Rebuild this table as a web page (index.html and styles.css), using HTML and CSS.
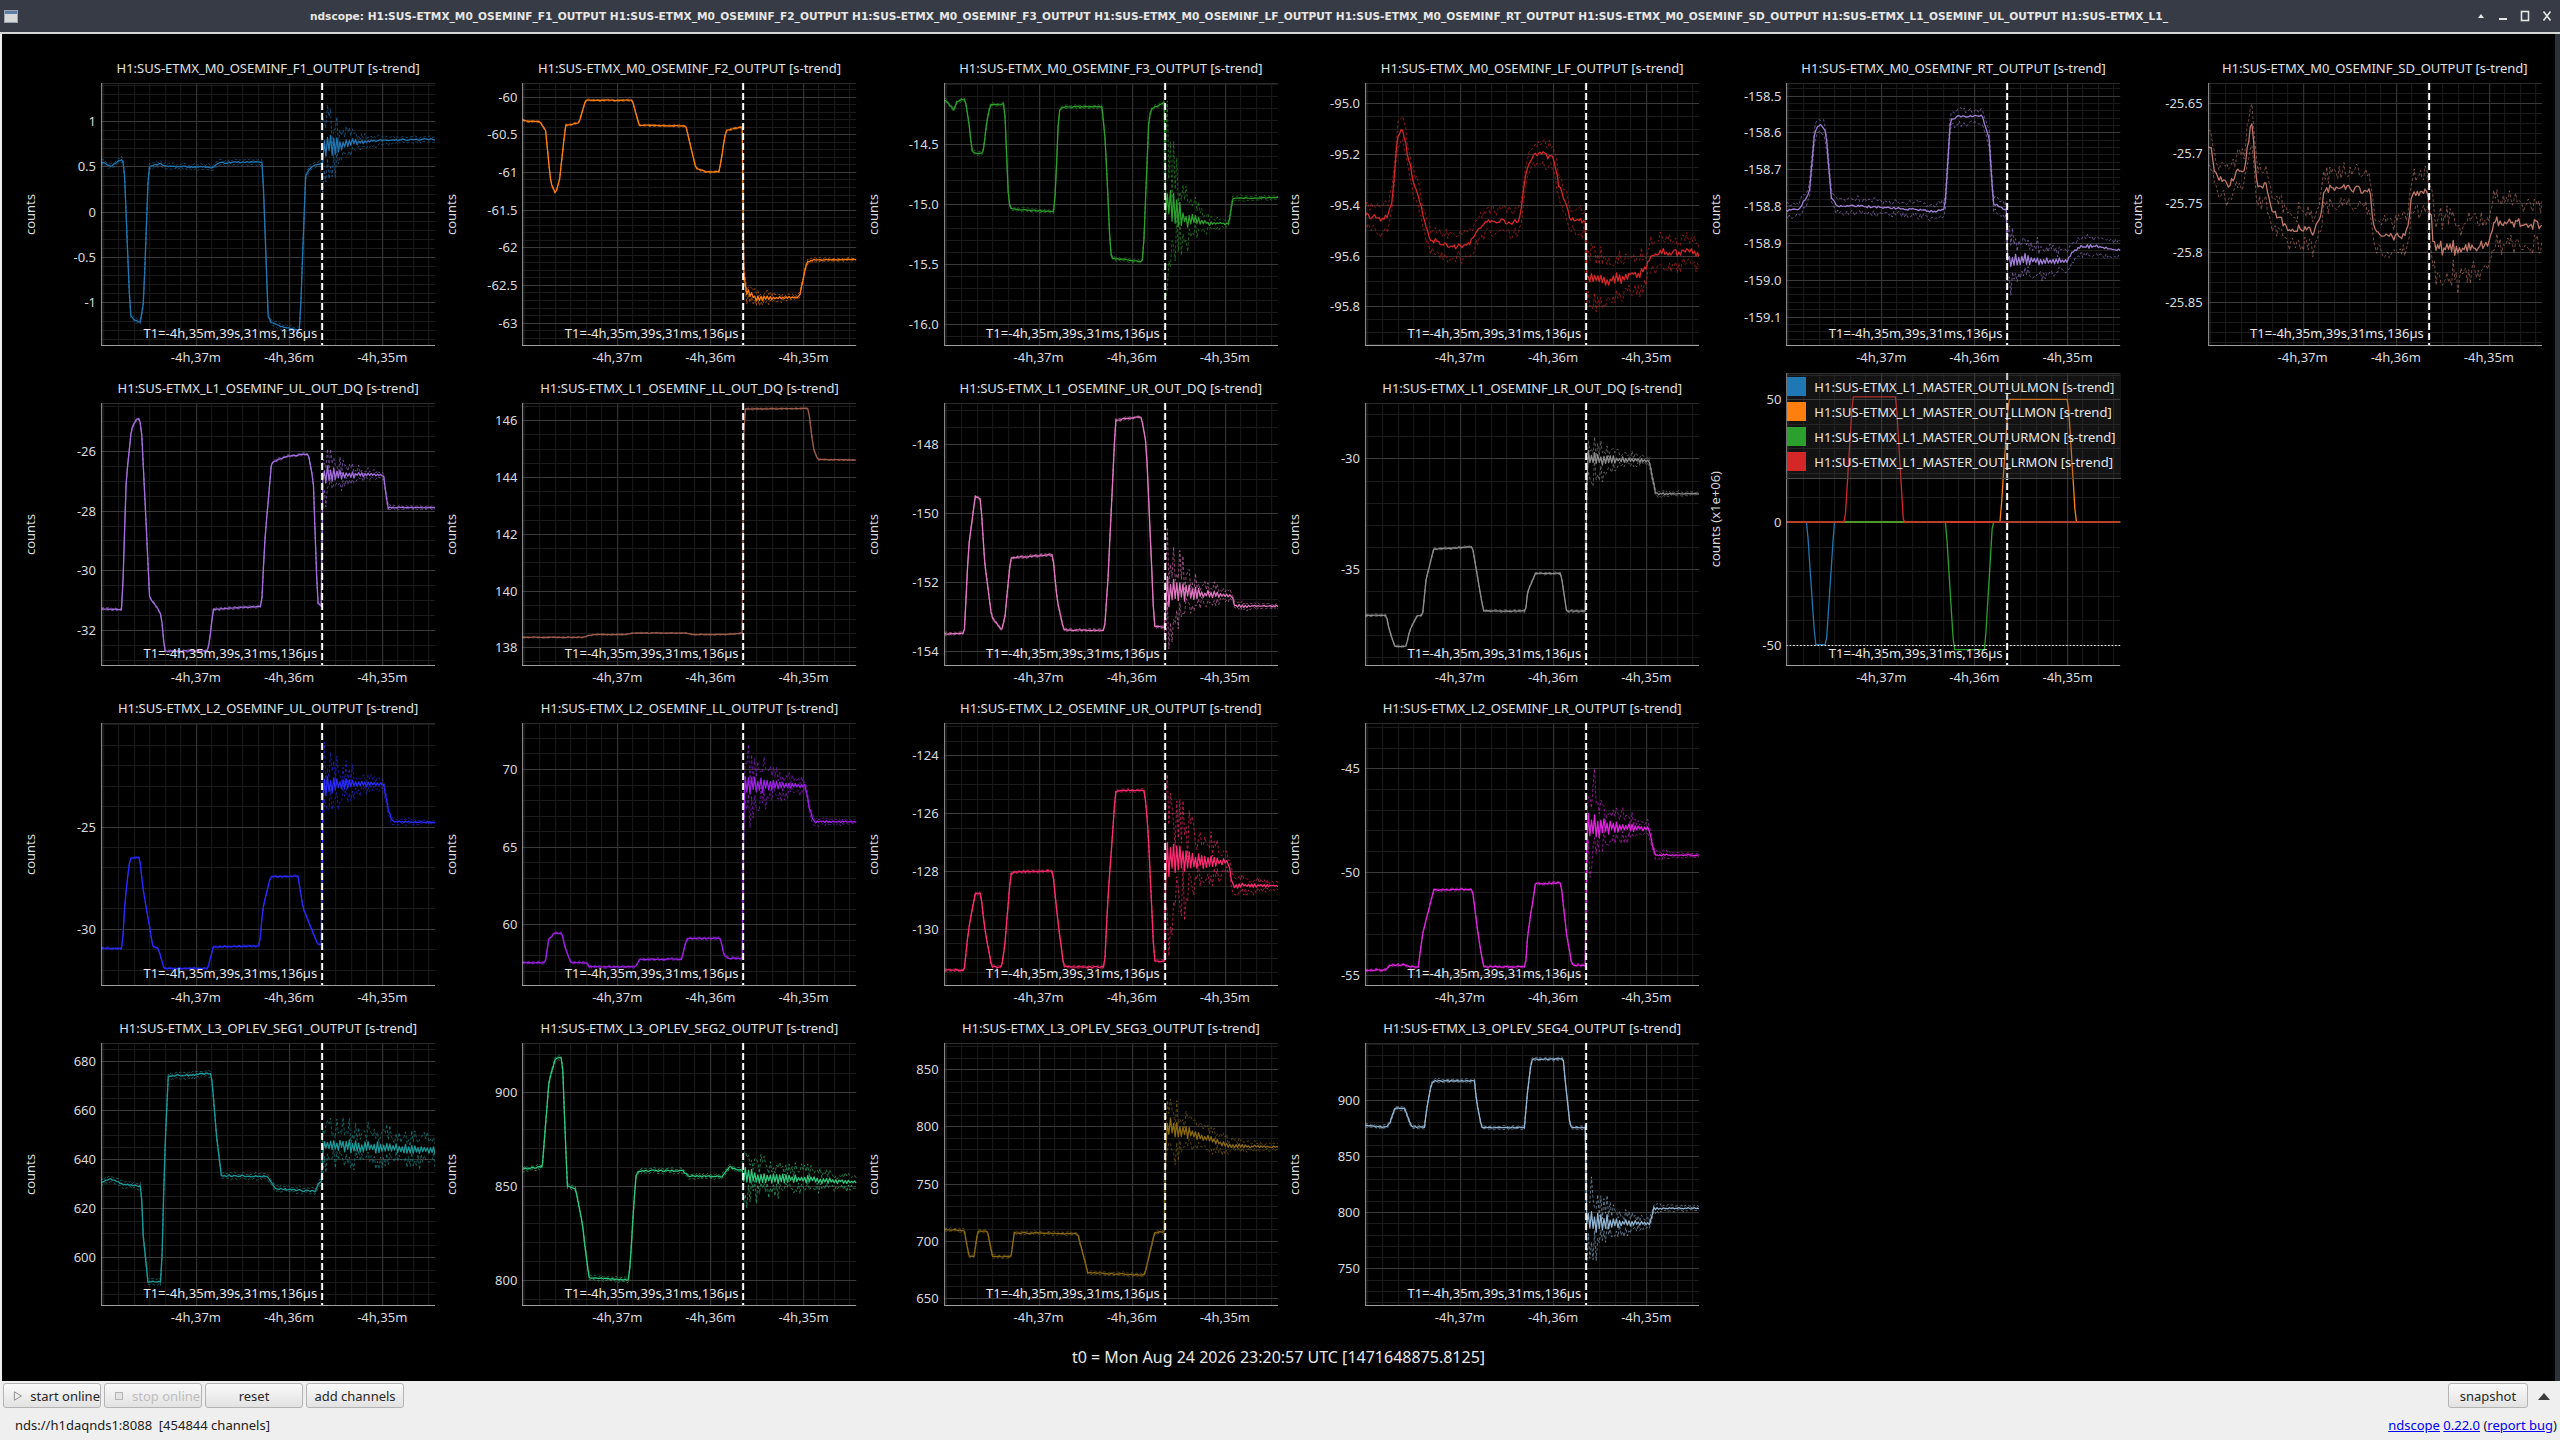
FILE: index.html
```html
<!DOCTYPE html>
<html lang="en">
<head>
<meta charset="utf-8">
<title>ndscope</title>
<link rel="stylesheet" href="styles.css">
</head>
<body>
<div class="window">
  <div class="titlebar">
    <div class="appicon"><svg width="14" height="13" viewBox="0 0 14 13"><rect x="0.5" y="0.5" width="13" height="12" fill="#d8d8d8" stroke="#9aa3ad"/><rect x="1" y="1" width="12" height="3" fill="#5b7fa6"/></svg></div>
    <div class="wtitle">ndscope: H1:SUS-ETMX_M0_OSEMINF_F1_OUTPUT H1:SUS-ETMX_M0_OSEMINF_F2_OUTPUT H1:SUS-ETMX_M0_OSEMINF_F3_OUTPUT H1:SUS-ETMX_M0_OSEMINF_LF_OUTPUT H1:SUS-ETMX_M0_OSEMINF_RT_OUTPUT H1:SUS-ETMX_M0_OSEMINF_SD_OUTPUT H1:SUS-ETMX_L1_OSEMINF_UL_OUTPUT H1:SUS-ETMX_L1_</div>
    <div class="wbtns">
      <svg width="10" height="10" viewBox="0 0 10 10"><path d="M2 7 L5 3 L8 7 Z" fill="#e6e6e6"/></svg>
      <svg width="10" height="10" viewBox="0 0 10 10"><rect x="1" y="7" width="8" height="2" fill="#e6e6e6"/></svg>
      <svg width="10" height="12" viewBox="0 0 10 12"><rect x="1.5" y="1.5" width="7" height="9" fill="none" stroke="#e6e6e6" stroke-width="1.6"/></svg>
      <svg width="10" height="12" viewBox="0 0 10 12"><path d="M1.5 1.5 L8.5 10.5 M8.5 1.5 L1.5 10.5" stroke="#e6e6e6" stroke-width="1.6"/></svg>
    </div>
  </div>

  <div class="canvas">
    <div class="grid">

      <!-- row 1 -->
      <div class="cell">
        <div class="ttl">H1:SUS-ETMX_M0_OSEMINF_F1_OUTPUT [s-trend]</div>
        <div class="frame">
          <div class="ylab"><span>counts</span></div>
          <div class="yticks"><span data-v="1">1</span><span data-v="0.5">0.5</span><span data-v="0">0</span><span data-v="-0.5">-0.5</span><span data-v="-1">-1</span></div>
          <div class="plot" data-p="p1"><svg class="g"></svg><div class="t1">T1=-4h,35m,39s,31ms,136µs</div></div>
        </div>
        <div class="xticks"><span class="xa">-4h,37m</span><span class="xb">-4h,36m</span><span class="xc">-4h,35m</span></div>
      </div>

      <div class="cell">
        <div class="ttl">H1:SUS-ETMX_M0_OSEMINF_F2_OUTPUT [s-trend]</div>
        <div class="frame">
          <div class="ylab"><span>counts</span></div>
          <div class="yticks"><span data-v="-60">-60</span><span data-v="-60.5">-60.5</span><span data-v="-61">-61</span><span data-v="-61.5">-61.5</span><span data-v="-62">-62</span><span data-v="-62.5">-62.5</span><span data-v="-63">-63</span></div>
          <div class="plot" data-p="p2"><svg class="g"></svg><div class="t1">T1=-4h,35m,39s,31ms,136µs</div></div>
        </div>
        <div class="xticks"><span class="xa">-4h,37m</span><span class="xb">-4h,36m</span><span class="xc">-4h,35m</span></div>
      </div>

      <div class="cell">
        <div class="ttl">H1:SUS-ETMX_M0_OSEMINF_F3_OUTPUT [s-trend]</div>
        <div class="frame">
          <div class="ylab"><span>counts</span></div>
          <div class="yticks"><span data-v="-14.5">-14.5</span><span data-v="-15">-15.0</span><span data-v="-15.5">-15.5</span><span data-v="-16">-16.0</span></div>
          <div class="plot" data-p="p3"><svg class="g"></svg><div class="t1">T1=-4h,35m,39s,31ms,136µs</div></div>
        </div>
        <div class="xticks"><span class="xa">-4h,37m</span><span class="xb">-4h,36m</span><span class="xc">-4h,35m</span></div>
      </div>

      <div class="cell">
        <div class="ttl">H1:SUS-ETMX_M0_OSEMINF_LF_OUTPUT [s-trend]</div>
        <div class="frame">
          <div class="ylab"><span>counts</span></div>
          <div class="yticks"><span data-v="-95">-95.0</span><span data-v="-95.2">-95.2</span><span data-v="-95.4">-95.4</span><span data-v="-95.6">-95.6</span><span data-v="-95.8">-95.8</span></div>
          <div class="plot" data-p="p4"><svg class="g"></svg><div class="t1">T1=-4h,35m,39s,31ms,136µs</div></div>
        </div>
        <div class="xticks"><span class="xa">-4h,37m</span><span class="xb">-4h,36m</span><span class="xc">-4h,35m</span></div>
      </div>

      <div class="cell">
        <div class="ttl">H1:SUS-ETMX_M0_OSEMINF_RT_OUTPUT [s-trend]</div>
        <div class="frame">
          <div class="ylab"><span>counts</span></div>
          <div class="yticks"><span data-v="-158.5">-158.5</span><span data-v="-158.6">-158.6</span><span data-v="-158.7">-158.7</span><span data-v="-158.8">-158.8</span><span data-v="-158.9">-158.9</span><span data-v="-159">-159.0</span><span data-v="-159.1">-159.1</span></div>
          <div class="plot" data-p="p5"><svg class="g"></svg><div class="t1">T1=-4h,35m,39s,31ms,136µs</div></div>
        </div>
        <div class="xticks"><span class="xa">-4h,37m</span><span class="xb">-4h,36m</span><span class="xc">-4h,35m</span></div>
      </div>

      <div class="cell">
        <div class="ttl">H1:SUS-ETMX_M0_OSEMINF_SD_OUTPUT [s-trend]</div>
        <div class="frame">
          <div class="ylab"><span>counts</span></div>
          <div class="yticks"><span data-v="-25.65">-25.65</span><span data-v="-25.7">-25.7</span><span data-v="-25.75">-25.75</span><span data-v="-25.8">-25.8</span><span data-v="-25.85">-25.85</span></div>
          <div class="plot" data-p="p6"><svg class="g"></svg><div class="t1">T1=-4h,35m,39s,31ms,136µs</div></div>
        </div>
        <div class="xticks"><span class="xa">-4h,37m</span><span class="xb">-4h,36m</span><span class="xc">-4h,35m</span></div>
      </div>

      <!-- row 2 -->
      <div class="cell">
        <div class="ttl">H1:SUS-ETMX_L1_OSEMINF_UL_OUT_DQ [s-trend]</div>
        <div class="frame">
          <div class="ylab"><span>counts</span></div>
          <div class="yticks"><span data-v="-26">-26</span><span data-v="-28">-28</span><span data-v="-30">-30</span><span data-v="-32">-32</span></div>
          <div class="plot" data-p="p7"><svg class="g"></svg><div class="t1">T1=-4h,35m,39s,31ms,136µs</div></div>
        </div>
        <div class="xticks"><span class="xa">-4h,37m</span><span class="xb">-4h,36m</span><span class="xc">-4h,35m</span></div>
      </div>

      <div class="cell">
        <div class="ttl">H1:SUS-ETMX_L1_OSEMINF_LL_OUT_DQ [s-trend]</div>
        <div class="frame">
          <div class="ylab"><span>counts</span></div>
          <div class="yticks"><span data-v="146">146</span><span data-v="144">144</span><span data-v="142">142</span><span data-v="140">140</span><span data-v="138">138</span></div>
          <div class="plot" data-p="p8"><svg class="g"></svg><div class="t1">T1=-4h,35m,39s,31ms,136µs</div></div>
        </div>
        <div class="xticks"><span class="xa">-4h,37m</span><span class="xb">-4h,36m</span><span class="xc">-4h,35m</span></div>
      </div>

      <div class="cell">
        <div class="ttl">H1:SUS-ETMX_L1_OSEMINF_UR_OUT_DQ [s-trend]</div>
        <div class="frame">
          <div class="ylab"><span>counts</span></div>
          <div class="yticks"><span data-v="-148">-148</span><span data-v="-150">-150</span><span data-v="-152">-152</span><span data-v="-154">-154</span></div>
          <div class="plot" data-p="p9"><svg class="g"></svg><div class="t1">T1=-4h,35m,39s,31ms,136µs</div></div>
        </div>
        <div class="xticks"><span class="xa">-4h,37m</span><span class="xb">-4h,36m</span><span class="xc">-4h,35m</span></div>
      </div>

      <div class="cell">
        <div class="ttl">H1:SUS-ETMX_L1_OSEMINF_LR_OUT_DQ [s-trend]</div>
        <div class="frame">
          <div class="ylab"><span>counts</span></div>
          <div class="yticks"><span data-v="-30">-30</span><span data-v="-35">-35</span></div>
          <div class="plot" data-p="p10"><svg class="g"></svg><div class="t1">T1=-4h,35m,39s,31ms,136µs</div></div>
        </div>
        <div class="xticks"><span class="xa">-4h,37m</span><span class="xb">-4h,36m</span><span class="xc">-4h,35m</span></div>
      </div>

      <div class="cell lg">
        <div class="frame tall">
          <div class="ylab"><span>counts (x1e+06)</span></div>
          <div class="yticks"><span data-v="50">50</span><span data-v="0">0</span><span data-v="-50">-50</span></div>
          <div class="plot" data-p="p11"><svg class="g"></svg>
            <div class="legend">
              <div class="li"><i class="sw sw-b"></i><span>H1:SUS-ETMX_L1_MASTER_OUT_ULMON [s-trend]</span></div>
              <div class="li"><i class="sw sw-o"></i><span>H1:SUS-ETMX_L1_MASTER_OUT_LLMON [s-trend]</span></div>
              <div class="li"><i class="sw sw-g"></i><span>H1:SUS-ETMX_L1_MASTER_OUT_URMON [s-trend]</span></div>
              <div class="li"><i class="sw sw-r"></i><span>H1:SUS-ETMX_L1_MASTER_OUT_LRMON [s-trend]</span></div>
            </div>
            <div class="t1">T1=-4h,35m,39s,31ms,136µs</div>
          </div>
        </div>
        <div class="xticks"><span class="xa">-4h,37m</span><span class="xb">-4h,36m</span><span class="xc">-4h,35m</span></div>
      </div>
      <div class="cell empty"></div>

      <!-- row 3 -->
      <div class="cell">
        <div class="ttl">H1:SUS-ETMX_L2_OSEMINF_UL_OUTPUT [s-trend]</div>
        <div class="frame">
          <div class="ylab"><span>counts</span></div>
          <div class="yticks"><span data-v="-25">-25</span><span data-v="-30">-30</span></div>
          <div class="plot" data-p="p12"><svg class="g"></svg><div class="t1">T1=-4h,35m,39s,31ms,136µs</div></div>
        </div>
        <div class="xticks"><span class="xa">-4h,37m</span><span class="xb">-4h,36m</span><span class="xc">-4h,35m</span></div>
      </div>

      <div class="cell">
        <div class="ttl">H1:SUS-ETMX_L2_OSEMINF_LL_OUTPUT [s-trend]</div>
        <div class="frame">
          <div class="ylab"><span>counts</span></div>
          <div class="yticks"><span data-v="70">70</span><span data-v="65">65</span><span data-v="60">60</span></div>
          <div class="plot" data-p="p13"><svg class="g"></svg><div class="t1">T1=-4h,35m,39s,31ms,136µs</div></div>
        </div>
        <div class="xticks"><span class="xa">-4h,37m</span><span class="xb">-4h,36m</span><span class="xc">-4h,35m</span></div>
      </div>

      <div class="cell">
        <div class="ttl">H1:SUS-ETMX_L2_OSEMINF_UR_OUTPUT [s-trend]</div>
        <div class="frame">
          <div class="ylab"><span>counts</span></div>
          <div class="yticks"><span data-v="-124">-124</span><span data-v="-126">-126</span><span data-v="-128">-128</span><span data-v="-130">-130</span></div>
          <div class="plot" data-p="p14"><svg class="g"></svg><div class="t1">T1=-4h,35m,39s,31ms,136µs</div></div>
        </div>
        <div class="xticks"><span class="xa">-4h,37m</span><span class="xb">-4h,36m</span><span class="xc">-4h,35m</span></div>
      </div>

      <div class="cell">
        <div class="ttl">H1:SUS-ETMX_L2_OSEMINF_LR_OUTPUT [s-trend]</div>
        <div class="frame">
          <div class="ylab"><span>counts</span></div>
          <div class="yticks"><span data-v="-45">-45</span><span data-v="-50">-50</span><span data-v="-55">-55</span></div>
          <div class="plot" data-p="p15"><svg class="g"></svg><div class="t1">T1=-4h,35m,39s,31ms,136µs</div></div>
        </div>
        <div class="xticks"><span class="xa">-4h,37m</span><span class="xb">-4h,36m</span><span class="xc">-4h,35m</span></div>
      </div>
      <div class="cell empty"></div>
      <div class="cell empty"></div>

      <!-- row 4 -->
      <div class="cell">
        <div class="ttl">H1:SUS-ETMX_L3_OPLEV_SEG1_OUTPUT [s-trend]</div>
        <div class="frame">
          <div class="ylab"><span>counts</span></div>
          <div class="yticks"><span data-v="680">680</span><span data-v="660">660</span><span data-v="640">640</span><span data-v="620">620</span><span data-v="600">600</span></div>
          <div class="plot" data-p="p16"><svg class="g"></svg><div class="t1">T1=-4h,35m,39s,31ms,136µs</div></div>
        </div>
        <div class="xticks"><span class="xa">-4h,37m</span><span class="xb">-4h,36m</span><span class="xc">-4h,35m</span></div>
      </div>

      <div class="cell">
        <div class="ttl">H1:SUS-ETMX_L3_OPLEV_SEG2_OUTPUT [s-trend]</div>
        <div class="frame">
          <div class="ylab"><span>counts</span></div>
          <div class="yticks"><span data-v="900">900</span><span data-v="850">850</span><span data-v="800">800</span></div>
          <div class="plot" data-p="p17"><svg class="g"></svg><div class="t1">T1=-4h,35m,39s,31ms,136µs</div></div>
        </div>
        <div class="xticks"><span class="xa">-4h,37m</span><span class="xb">-4h,36m</span><span class="xc">-4h,35m</span></div>
      </div>

      <div class="cell">
        <div class="ttl">H1:SUS-ETMX_L3_OPLEV_SEG3_OUTPUT [s-trend]</div>
        <div class="frame">
          <div class="ylab"><span>counts</span></div>
          <div class="yticks"><span data-v="850">850</span><span data-v="800">800</span><span data-v="750">750</span><span data-v="700">700</span><span data-v="650">650</span></div>
          <div class="plot" data-p="p18"><svg class="g"></svg><div class="t1">T1=-4h,35m,39s,31ms,136µs</div></div>
        </div>
        <div class="xticks"><span class="xa">-4h,37m</span><span class="xb">-4h,36m</span><span class="xc">-4h,35m</span></div>
      </div>

      <div class="cell">
        <div class="ttl">H1:SUS-ETMX_L3_OPLEV_SEG4_OUTPUT [s-trend]</div>
        <div class="frame">
          <div class="ylab"><span>counts</span></div>
          <div class="yticks"><span data-v="900">900</span><span data-v="850">850</span><span data-v="800">800</span><span data-v="750">750</span></div>
          <div class="plot" data-p="p19"><svg class="g"></svg><div class="t1">T1=-4h,35m,39s,31ms,136µs</div></div>
        </div>
        <div class="xticks"><span class="xa">-4h,37m</span><span class="xb">-4h,36m</span><span class="xc">-4h,35m</span></div>
      </div>
      <div class="cell empty"></div>
      <div class="cell empty"></div>
    </div>
    <div class="t0">t0 = Mon Aug 24 2026 23:20:57 UTC [1471648875.8125]</div>
  </div>

  <div class="controls">
    <div class="btn"><svg class="bi" width="12" height="12" viewBox="0 0 12 12"><path d="M2.5 1.5 L10 6 L2.5 10.5 Z" fill="none" stroke="#8a8a8a" stroke-width="1"/></svg>start online</div>
    <div class="btn disabled"><svg class="bi" width="12" height="12" viewBox="0 0 12 12"><rect x="2.5" y="2.5" width="7" height="7" fill="#e4e4e4" stroke="#b4b4b4"/></svg>stop online</div>
    <div class="btn center">reset</div>
    <div class="btn center">add channels</div>
    <div class="spacer"></div>
    <div class="btn center snap">snapshot</div>
    <div class="uparrow"><svg width="14" height="10" viewBox="0 0 14 10"><path d="M1 9 L7 2 L13 9 Z" fill="#3c3c3c"/></svg></div>
  </div>
  <div class="status">
    <div class="srv">nds://h1daqnds1:8088&nbsp;&nbsp;[454844 channels]</div>
    <div class="ver"><a href="#">ndscope</a> <a href="#">0.22.0</a> (<a href="#">report bug</a>)</div>
  </div>
</div>
<script src="script.js"></script>
</body>
</html>
```

FILE: styles.css
```css
* { box-sizing: border-box; margin: 0; padding: 0; }
html, body {
  width: 2560px;
  height: 1440px;
  overflow: hidden;
  background: #efefef;
  font-family: "Noto Sans", "Open Sans", sans-serif;
}
.window { display: flex; flex-direction: column; width: 2560px; height: 1440px; }

.titlebar {
  height: 34px;
  background: #363b45;
  border-bottom: 2px solid #d6d6d6;
  display: flex;
  align-items: center;
  padding: 0 6px 0 4px;
}
.appicon { width: 18px; display: flex; align-items: center; }
.wtitle {
  flex: 1;
  text-align: center;
  white-space: nowrap;
  overflow: hidden;
  font-family: "DejaVu Sans", "Liberation Sans", sans-serif;
  font-weight: bold;
  font-size: 10.6px;
  line-height: 16px;
  color: #e6e6e6;
  padding: 0 40px 0 20px;
}
.wbtns { display: flex; align-items: center; gap: 12px; padding-right: 2px; }

.canvas {
  height: 1347px;
  background: #000;
  margin-left: 2px;
  border-right: 5px solid #2d3139;
  display: flex;
  flex-direction: column;
}
.grid {
  display: grid;
  grid-template-columns: repeat(6, 1fr);
  grid-template-rows: repeat(4, 320px);
  padding: 19px 12px 0 13px;
}
.cell { display: flex; flex-direction: column; padding-top: 5px; min-width: 0; }
.cell.lg { padding-top: 0; }
.ttl {
  height: 20px;
  line-height: 20px;
  margin-left: 86px;
  margin-right: 1px;
  text-align: center;
  white-space: nowrap;
  font-size: 13px;
  color: #e2e2e2;
}
.frame { height: 263px; margin-top: 5px; display: flex; }
.frame.tall { height: 293px; margin-top: 0; }
.ylab { width: 30px; display: flex; align-items: center; justify-content: center; }
.ylab span {
  writing-mode: vertical-rl;
  transform: rotate(180deg);
  font-size: 13px;
  color: #d8d8d8;
  white-space: nowrap;
}
.yticks { width: 56px; position: relative; }
.yticks span {
  position: absolute;
  right: 5px;
  transform: translateY(-50%);
  font-size: 13px;
  line-height: 16px;
  color: #dadada;
  white-space: nowrap;
}
.plot { flex: 1; position: relative; overflow: hidden; margin-right: 1px; }
.plot svg.g { position: absolute; left: 0; top: 0; width: 100%; height: 100%; display: block; }
.t1 {
  position: absolute;
  bottom: 5px;
  right: calc(33.85% + 5px);
  font-size: 13px;
  line-height: 16px;
  color: #e8e8e8;
  white-space: nowrap;
}
.xticks { height: 22px; margin-left: 86px; margin-right: 1px; position: relative; }
.xticks span {
  position: absolute;
  top: 3px;
  transform: translateX(-50%);
  font-size: 13px;
  line-height: 16px;
  color: #dadada;
  white-space: nowrap;
}
.xticks .xa { left: 28.4%; }
.xticks .xb { left: 56.26%; }
.xticks .xc { left: 84.12%; }

.legend {
  position: absolute;
  left: 0;
  right: 0;
  top: 0;
  height: 106px;
  padding-top: 1px;
  background: rgba(70, 70, 70, 0.28);
  border-bottom: 1px solid #4a4a4a;
}
.li { height: 25px; display: flex; align-items: center; }
.sw { display: block; width: 19px; height: 19px; margin: 0 8px 0 1px; }
.sw-b { background: #1f77b4; }
.sw-o { background: #ff7f0e; }
.sw-g { background: #2ca02c; }
.sw-r { background: #d62728; }
.li span { font-size: 13px; color: #e6e6e6; white-space: nowrap; }

.t0 {
  height: 48px;
  line-height: 48px;
  text-align: center;
  font-size: 16px;
  color: #e8e8e8;
}

.controls {
  height: 29px;
  display: flex;
  align-items: flex-start;
  gap: 3px;
  padding: 2px 0 0 3px;
}
.btn {
  width: 98px;
  height: 25px;
  border: 1px solid #b4b4b4;
  border-radius: 3px;
  background: linear-gradient(#fafafa, #e2e2e2);
  font-size: 13px;
  color: #262626;
  display: flex;
  align-items: center;
  padding-left: 8px;
  white-space: nowrap;
}
.btn .bi { margin-right: 7px; }
.btn.center { justify-content: center; padding-left: 0; }
.btn.disabled { color: #bdbdbd; }
.btn.snap { width: 80px; }
.spacer { flex: 1; }
.uparrow { width: 26px; height: 25px; display: flex; align-items: center; justify-content: center; margin-right: 3px; }
.status {
  height: 30px;
  display: flex;
  align-items: center;
  justify-content: space-between;
  padding: 0 3px 0 15px;
  font-size: 13px;
  color: #202020;
}
.ver a { color: #0000ee; text-decoration: underline; }
```

FILE: script.js
```js
(function () {
  var FC = 0.6615;
  var XMAJ = [0.284, 0.5626, 0.8412];
  var C = {
    p1: { t: 1.42, b: -1.48, m: 0.1, c: '#1f77b4', n: .008, e: .03, ra: .2, re: .5, tau: .06,
      k: [0,.55, .032,.5, .047,.55, .062,.58, .069,.5, .087,-1.15, .102,-1.2, .117,-1.22, .127,-1.0, .142,.5, .177,.53, .197,.5, .336,.49, .351,.54, .483,.55, .5,-1.15, .51,-1.22, .55,-1.28, .595,-1.3, .612,.4, .63,.5, .66,.53, .663,.72, .75,.76, .85,.79, 1,.8] },
    p2: { t: -59.82, b: -63.31, m: 0.1, c: '#ff7f0e', n: .004, e: .012, ra: .06, re: .16, tau: .1,
      k: [0,-60.31, .02,-60.33, .053,-60.33, .07,-60.45, .086,-61.15, .10,-61.29, .112,-61.1, .13,-60.38, .17,-60.35, .19,-60.05, .33,-60.05, .35,-60.38, .49,-60.39, .52,-60.95, .55,-61.0, .59,-61.0, .61,-60.45, .66,-60.40, .664,-62.55, .70,-62.68, .83,-62.66, .852,-62.2, .87,-62.17, 1,-62.16] },
    p3: { t: -13.99, b: -16.18, m: 0.1, c: '#2ca02c', n: .004, e: .015, ra: .25, re: .9, tau: .05,
      k: [0,-14.13, .013,-14.16, .028,-14.215, .038,-14.15, .053,-14.126, .063,-14.13, .073,-14.30, .083,-14.548, .09,-14.576, .113,-14.576, .118,-14.55, .128,-14.30, .138,-14.173, .178,-14.165, .183,-14.3, .193,-14.992, .203,-15.04, .328,-15.062, .333,-14.9, .343,-14.229, .353,-14.19, .473,-14.187, .483,-14.5, .498,-15.409, .503,-15.45, .593,-15.478, .598,-15.3, .613,-14.27, .623,-14.2, .66,-14.15, .664,-15.0, .72,-15.12, .80,-15.16, .853,-15.16, .863,-14.96, .87,-14.95, 1,-14.942] },
    p4: { t: -94.92, b: -95.956, m: 0.05, c: '#d62728', n: .012, e: .05, ra: .03, re: .09, tau: .14,
      k: [0,-95.44, .03,-95.45, .056,-95.46, .079,-95.41, .096,-95.13, .113,-95.105, .129,-95.22, .162,-95.39, .195,-95.54, .228,-95.55, .278,-95.565, .311,-95.55, .328,-95.52, .361,-95.466, .46,-95.47, .48,-95.29, .497,-95.21, .53,-95.197, .563,-95.217, .579,-95.315, .613,-95.447, .66,-95.47, .664,-95.683, .727,-95.696, .776,-95.683, .825,-95.67, .858,-95.6, .891,-95.58, .94,-95.59, .974,-95.575, 1,-95.60] },
    p5: { t: -158.466, b: -159.18, m: 0.02, c: '#a07fd8', n: .003, e: .02, ra: .025, re: .07, tau: .12,
      k: [0,-158.811, .036,-158.81, .069,-158.766, .086,-158.594, .102,-158.58, .119,-158.6, .135,-158.775, .152,-158.8, .218,-158.8, .317,-158.805, .449,-158.815, .475,-158.81, .492,-158.566, .515,-158.556, .587,-158.556, .607,-158.612, .620,-158.793, .647,-158.806, .66,-158.81, .664,-158.956, .716,-158.947, .842,-158.95, .86,-158.92, .89,-158.91, .94,-158.91, 1,-158.92] },
    p6: { t: -25.6296, b: -25.894, m: 0.01, c: '#c0786a', n: .004, e: .018, ra: .008, re: .03, tau: .2,
      k: [0,-25.697, .007,-25.69, .017,-25.72, .047,-25.73, .061,-25.735, .076,-25.725, .091,-25.717, .106,-25.72, .121,-25.687, .129,-25.667, .136,-25.69, .146,-25.73, .161,-25.737, .175,-25.73, .185,-25.754, .205,-25.764, .225,-25.77, .245,-25.777, .284,-25.775, .314,-25.78, .334,-25.767, .349,-25.737, .384,-25.734, .473,-25.737, .483,-25.735, .498,-25.78, .532,-25.784, .587,-25.784, .597,-25.775, .611,-25.74, .656,-25.738, .663,-25.75, .676,-25.794, .760,-25.797, .839,-25.792, .854,-25.77, 1,-25.772] },
    p7: { t: -24.40, b: -33.20, m: 0.5, c: '#a46ee0', n: .015, e: .04, ra: .35, re: .9, tau: .08,
      k: [0,-31.3, .0625,-31.3, .075,-27, .09,-25.3, .105,-24.95, .115,-24.9, .122,-25.5, .145,-30.9, .171,-31.3, .18,-31.5, .19,-32.7, .32,-32.7, .336,-31.3, .48,-31.2, .49,-29, .51,-26.4, .55,-26.2, .62,-26.1, .635,-27, .648,-31.1, .66,-31.2, .663,-26.8, .845,-26.8, .858,-27.9, 1,-27.9] },
    p8: { t: 146.61, b: 137.34, m: 0.5, c: '#9c5c4c', n: .008, e: .02, ra: .01, re: .03, tau: .1,
      k: [0,138.35, .179,138.35, .212,138.45, .31,138.45, .328,138.5, .49,138.5, .51,138.45, .609,138.45, .66,138.5, .664,146.4, .857,146.42, .872,145.0, .885,144.62, 1,144.6] },
    p9: { t: -146.80, b: -154.44, m: 0.5, c: '#e377c2', n: .015, e: .04, ra: .6, re: 1.6, tau: .08,
      k: [0,-153.5, .06,-153.5, .073,-151, .093,-149.5, .109,-149.6, .122,-151.5, .142,-153, .172,-153.4, .182,-153, .199,-151.3, .325,-151.2, .338,-152.5, .358,-153.4, .480,-153.4, .490,-152, .513,-147.3, .59,-147.2, .605,-148, .629,-153.3, .66,-153.3, .664,-152.3, .86,-152.4, .872,-152.7, 1,-152.7] },
    p10: { t: -27.49, b: -39.39, m: 1, c: '#8e8e8e', n: .015, e: .05, ra: .5, re: 1.4, tau: .09,
      k: [0,-37.1, .063,-37.1, .073,-37.8, .089,-38.5, .123,-38.5, .133,-37.8, .156,-37.1, .172,-37.1, .182,-35.5, .205,-34.1, .321,-34.0, .338,-35.5, .354,-36.9, .48,-36.9, .487,-36, .510,-35.2, .586,-35.2, .603,-36.9, .66,-36.9, .664,-30, .85,-30.1, .87,-31.6, 1,-31.6] },
    p11: { t: 60.72, b: -58.67, m: 10, legend: true,
      lines: [
        { c: '#1f77b4', k: [0,0, .062,0, .087,-50, .12,-50, .144,0, 1,0] },
        { c: '#ff7f0e', k: [0,0, .641,0, .666,50, .844,50, .867,0, 1,0] },
        { c: '#2ca02c', k: [0,0, .478,0, .502,-52, .595,-52, .618,0, 1,0] },
        { c: '#d62728', k: [0,0, .176,0, .199,51, .329,51, .351,0, 1,0] }
      ] },
    p12: { t: -19.94, b: -32.79, m: 1, c: '#2a2aff', n: .02, e: .05, ra: .6, re: 2.0, tau: .09,
      k: [0,-30.95, .063,-30.95, .072,-28.5, .086,-26.55, .115,-26.5, .125,-28, .155,-30.87, .171,-30.95, .188,-31.93, .319,-31.93, .336,-30.87, .474,-30.84, .484,-29, .507,-27.45, .589,-27.42, .605,-29, .648,-30.74, .66,-30.74, .664,-22.97, .845,-22.9, .86,-24.2, .872,-24.76, 1,-24.8] },
    p13: { t: 72.96, b: 56.03, m: 1, c: '#9d22e8', n: .03, e: .08, ra: .9, re: 3.0, tau: .09,
      k: [0,57.53, .069,57.53, .079,59.0, .096,59.42, .119,59.42, .129,58.5, .146,57.53, .195,57.53, .2,57.27, .34,57.27, .351,57.75, .477,57.75, .493,59.1, .593,59.1, .605,58.0, .619,57.81, .66,57.81, .664,68.97, .848,68.9, .86,67.5, .872,66.61, 1,66.6] },
    p14: { t: -122.88, b: -131.97, m: 0.5, c: '#ff2b73', n: .02, e: .05, ra: .8, re: 3.2, tau: .1,
      k: [0,-131.42, .06,-131.42, .073,-130, .093,-128.77, .109,-128.77, .122,-130, .142,-131.3, .172,-131.32, .182,-130.5, .199,-128.08, .215,-128.02, .325,-128.0, .338,-129.5, .358,-131.3, .48,-131.32, .49,-129, .513,-125.25, .53,-125.2, .6,-125.2, .61,-126.5, .629,-131.1, .66,-131.12, .664,-127.56, .85,-127.7, .865,-128.5, 1,-128.5] },
    p15: { t: -42.81, b: -55.53, m: 1, c: '#e024e0', n: .03, e: .06, ra: .9, re: 3.0, tau: .08,
      k: [0,-54.76, .063,-54.76, .073,-54.52, .122,-54.52, .132,-54.6, .159,-54.6, .172,-53, .205,-50.89, .321,-50.85, .338,-53, .354,-54.6, .48,-54.6, .487,-53, .510,-50.57, .586,-50.55, .603,-53, .619,-54.52, .66,-54.52, .664,-47.83, .85,-47.9, .862,-48.9, .87,-49.2, 1,-49.2] },
    p16: { t: 687.55, b: 580.1, m: 5, c: '#1b9a9a', n: .4, e: 1.2, ra: 3, re: 10, tau: .5,
      k: [0,630.8, .03,632, .06,630, .12,629, .125,610, .14,590, .18,590, .19,640, .2,674, .33,675, .345,650, .36,633.5, .5,633, .52,628, .64,627, .65,630, .66,631, .664,646, .8,645, 1,643.5] },
    p17: { t: 925.8, b: 786.2, m: 10, c: '#2fc97f', n: .4, e: 1.2, ra: 5, re: 15, tau: .2,
      k: [0,859, .06,860, .08,905, .1,918, .12,918, .135,850, .16,848, .18,830, .2,801, .32,800, .34,855, .35,858, .48,858, .5,855, .6,855, .62,860, .66,858, .664,855, 1,852] },
    p18: { t: 872.9, b: 642.9, m: 10, c: '#8b6a10', n: .5, e: 1.5, ra: 10, re: 30, tau: .12,
      k: [0,710, .06,709, .075,686, .09,686, .1,708, .13,708, .145,686, .2,686, .21,707, .4,706, .43,672, .6,670, .63,707, .66,708, .664,800, .78,790, .85,783, 1,782] },
    p19: { t: 950.8, b: 716.4, m: 10, c: '#91b5d2', n: .5, e: 1.5, ra: 14, re: 40, tau: .08,
      k: [0,877.7, .013,876.8, .063,875.7, .075,880, .088,892.6, .118,892.6, .128,885, .138,876.3, .178,875.7, .183,890, .198,914.9, .208,917, .328,917, .333,900, .348,876.3, .353,875.4, .478,875.4, .483,900, .498,935.7, .503,936.5, .593,936.5, .598,920, .613,878, .618,875.4, .66,875.4, .664,791.6, .853,790, .863,803.5, 1,803.5] }
  };

  function rng(seed) {
    return function () {
      seed |= 0; seed = seed + 0x6D2B79F5 | 0;
      var t = Math.imul(seed ^ seed >>> 15, 1 | seed);
      t = t + Math.imul(t ^ t >>> 7, 61 | t) ^ t;
      return ((t ^ t >>> 14) >>> 0) / 4294967296;
    };
  }
  function interp(k, f) {
    for (var i = 2; i < k.length; i += 2) {
      if (f <= k[i]) {
        var f0 = k[i - 2], v0 = k[i - 1], f1 = k[i], v1 = k[i + 1];
        var u = f1 > f0 ? (f - f0) / (f1 - f0) : 1;
        return v0 + (v1 - v0) * u;
      }
    }
    return k[k.length - 1];
  }
  function ln(x1, y1, x2, y2, col, extra) {
    return '<line x1="' + x1 + '" y1="' + y1 + '" x2="' + x2 + '" y2="' + y2 + '" stroke="' + col + '"' + (extra || ' stroke-width="1"') + '/>';
  }
  function poly(pts, col, w, extra) {
    return '<polyline fill="none" stroke="' + col + '" stroke-width="' + w + '" stroke-linejoin="round" points="' + pts.join(' ') + '"' + (extra || '') + '/>';
  }

  var plots = document.querySelectorAll('.plot[data-p]');
  for (var pi = 0; pi < plots.length; pi++) {
    var pl = plots[pi];
    var cfg = C[pl.getAttribute('data-p')];
    if (!cfg) continue;
    var W = pl.clientWidth, H = pl.clientHeight;
    var sy = (function (c, h) { return function (v) { return (c.t - v) / (c.t - c.b) * h; }; })(cfg, H);
    var svg = pl.querySelector('svg.g');
    svg.setAttribute('viewBox', '0 0 ' + W + ' ' + H);
    var s = '';

    var m = cfg.m;
    var i0 = Math.ceil(cfg.b / m - 1e-9), i1 = Math.floor(cfg.t / m + 1e-9);
    for (var i = i0; i <= i1; i++) {
      var yy = Math.round(sy(i * m)) + 0.5;
      s += ln(0, yy, W, yy, '#1b1b1b');
    }
    for (var j = 0; j < 30; j++) {
      var fx = 0.00542 + j * 0.04643;
      if (fx >= 1) break;
      var xx = Math.round(fx * W) + 0.5;
      s += ln(xx, 0, xx, H, '#1b1b1b');
    }
    var frame = pl.parentNode;
    var tks = frame.querySelectorAll('.yticks span');
    for (var q = 0; q < tks.length; q++) {
      var v = parseFloat(tks[q].getAttribute('data-v'));
      var yv = sy(v);
      tks[q].style.top = (yv / H * 100).toFixed(3) + '%';
      var yr = Math.round(yv) + 0.5;
      s += ln(0, yr, W, yr, '#3a3a3a');
    }
    for (var a = 0; a < XMAJ.length; a++) {
      var xm = Math.round(XMAJ[a] * W) + 0.5;
      s += ln(xm, 0, xm, H, '#373737');
    }
    s += ln(0, 0.5, W, 0.5, '#2a2a2a');

    var N = Math.round(W / 1.55);
    if (cfg.legend) {
      for (var L = 0; L < cfg.lines.length; L++) {
        var lp = [];
        for (var n = 0; n < N; n++) {
          var f = n / (N - 1);
          lp.push((f * W).toFixed(1) + ',' + sy(interp(cfg.lines[L].k, f)).toFixed(1));
        }
        s += poly(lp, cfg.lines[L].c, 1.3);
      }
      var yd = Math.round(sy(-50)) + 0.5;
      s += ln(0, yd, W, yd, '#ffffff', ' stroke-width="1" stroke-dasharray="1.5 2"');
    } else {
      var r = rng(1000 + pi * 7919);
      var mean = [], lo = [], hi = [];
      for (var n2 = 0; n2 < N; n2++) {
        var f2 = n2 / (N - 1);
        var base = interp(cfg.k, f2);
        var ringA = 0, ringE = 0;
        if (f2 > FC) {
          var dec = Math.exp(-(f2 - FC) / cfg.tau);
          ringA = cfg.ra * dec; ringE = cfg.re * dec;
        }
        var sign = (n2 % 2) ? 1 : -1;
        var mv = base + cfg.n * (r() * 2 - 1) + ringA * sign * (0.3 + 0.7 * r());
        var up = mv + cfg.e * (0.5 + 0.8 * r()) + ringE * (0.2 + 0.8 * r());
        var dn = mv - cfg.e * (0.5 + 0.8 * r()) - ringE * (0.2 + 0.8 * r());
        var X = (f2 * W).toFixed(1);
        mean.push(X + ',' + sy(mv).toFixed(1));
        hi.push(X + ',' + sy(up).toFixed(1));
        lo.push(X + ',' + sy(dn).toFixed(1));
      }
      s += poly(hi, cfg.c, 1, ' stroke-dasharray="3 2" opacity="0.6"');
      s += poly(lo, cfg.c, 1, ' stroke-dasharray="3 2" opacity="0.6"');
      s += poly(mean, cfg.c, 1.3);
    }

    var xc = Math.round(FC * W);
    s += ln(xc, 0, xc, H, '#ffffff', ' stroke-width="2" stroke-dasharray="7 3"');
    s += ln(0.5, 0, 0.5, H, '#a0a0a0');
    s += ln(0, H - 0.5, W, H - 0.5, '#a0a0a0');
    svg.innerHTML = s;
  }
})();
```
